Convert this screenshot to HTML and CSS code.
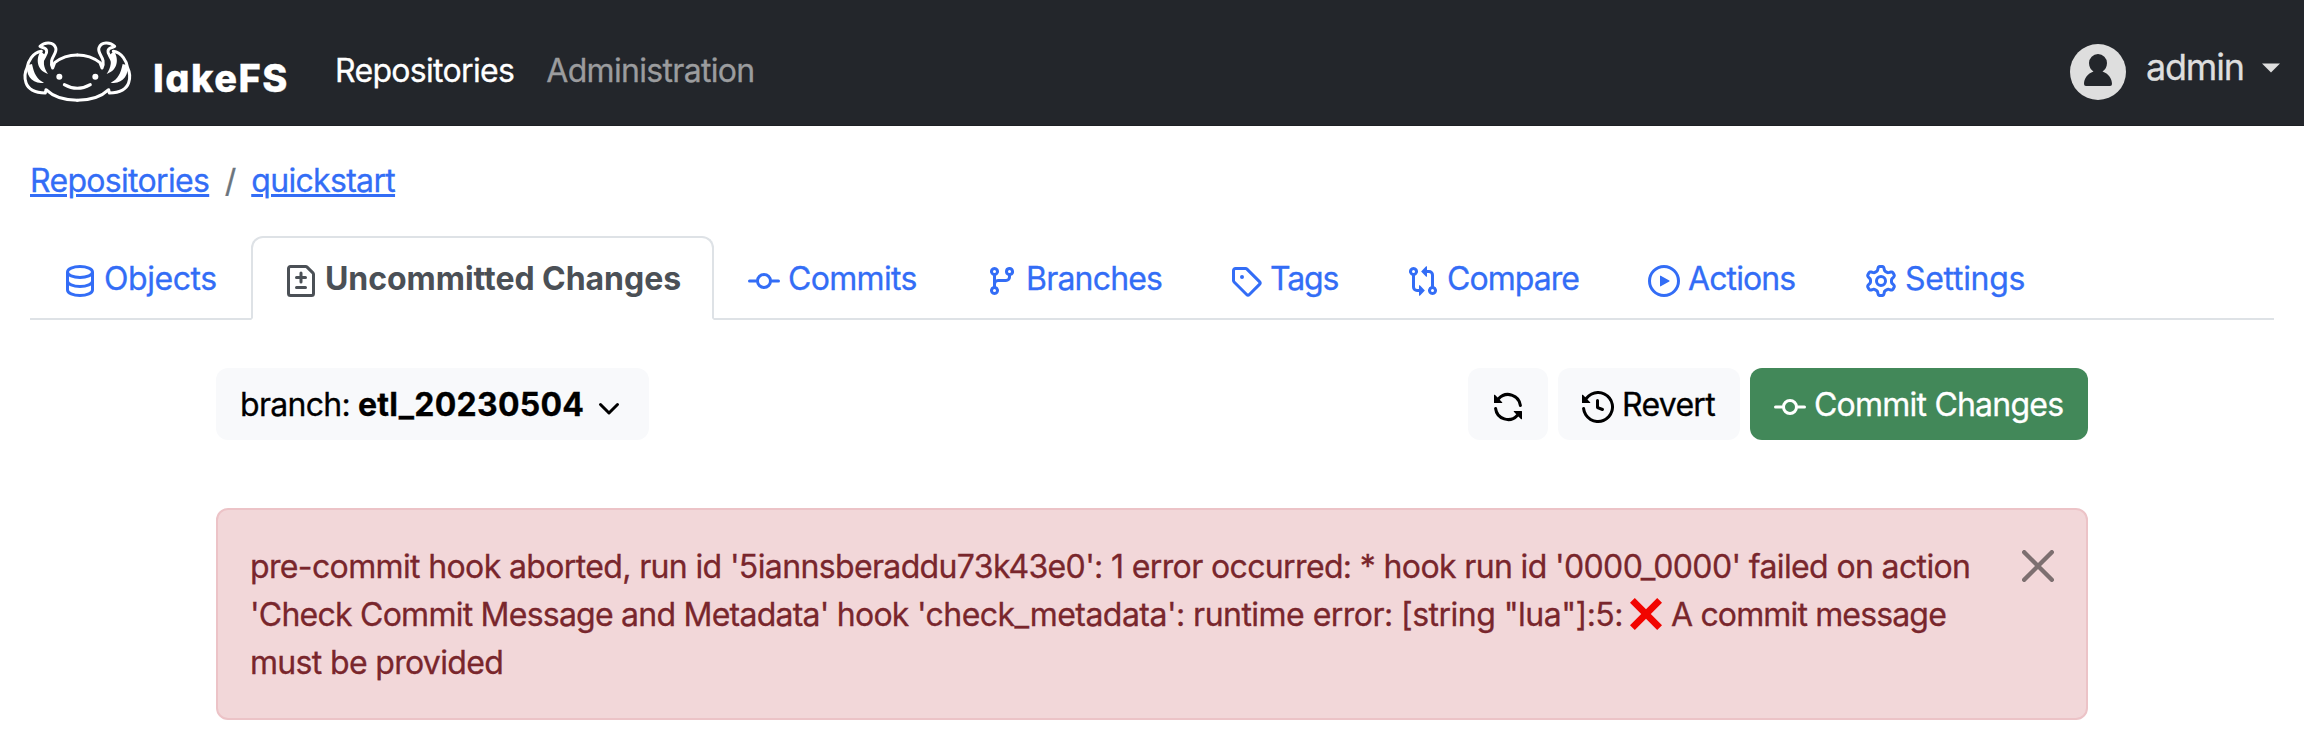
FILE: index.html
```html
<!DOCTYPE html>
<html lang="en">
<head>
<meta charset="utf-8">
<title>lakeFS</title>
<link rel="stylesheet" href="styles.css">
</head>
<body>
<header class="navbar">
  <a class="brand">
    <svg class="brand-mark" viewBox="0 0 360 210" aria-hidden="true">
      <defs>
        <g id="axolotl-side">
          <path class="line" d="M172 57Q133 57 104 80L98 96C84 66 114 54 107 35C100 17 74 17 60 31C66 36 78 33 80 44C83 58 66 62 66 84"/>
          <path class="line" d="M64 46C38 50 24 76 21 96C13 112 14 128 18 140C26 164 50 170 76 171L78 161C102 184 140 193 172 193"/>
          <path class="solid" d="M62 46C48 66 48 102 84 114C70 94 68 74 76 58ZM22 88C16 116 36 146 72 140C50 130 42 112 36 84Z"/>
          <circle class="solid" cx="118" cy="122" r="9"/>
        </g>
      </defs>
      <use href="#axolotl-side"/>
      <use href="#axolotl-side" transform="translate(344 0) scale(-1 1)"/>
      <path class="line" d="M133 146Q172 168 211 146"/>
    </svg>
    <span class="brand-name">lakeFS</span>
  </a>
  <nav class="nav-links">
    <a class="nav-link current">Repositories</a>
    <a class="nav-link">Administration</a>
  </nav>
  <div class="user">
    <svg class="avatar" viewBox="0 0 56 56" aria-hidden="true">
      <circle cx="28" cy="28" r="28" fill="#dedede"/>
      <path fill="#23262b" d="M28 10a9 9 0 0 1 9 9c0 4-2 7-4.500 8.500c6 2 9.500 7 9.500 12.500a2 2 0 0 1-2 2H16a2 2 0 0 1-2-2c0-5.500 3.500-10.500 9.500-12.500C21 26 19 23 19 19a9 9 0 0 1 9-9Z"/>
    </svg>
    <span class="user-name">admin</span>
    <svg class="caret" viewBox="0 0 18 10" aria-hidden="true"><path d="M0 .5h18L9 9.500Z"/></svg>
  </div>
</header>

<main class="page">
  <div class="breadcrumb"><a class="crumb">Repositories</a><span class="slash">/</span><a class="crumb">quickstart</a></div>

  <nav class="tabs">
    <a class="tab objects"><svg class="icon" viewBox="0 0 16 16"><g fill="none" stroke="currentColor" stroke-width="1.500"><ellipse cx="8" cy="3.500" rx="6.250" ry="2.700"/><path d="M1.750 3.500v9c0 1.500 2.800 2.750 6.250 2.750s6.250-1.250 6.250-2.750v-9M1.750 8c0 1.500 2.800 2.750 6.250 2.750S14.250 9.500 14.250 8"/></g></svg><span>Objects</span></a>
    <a class="tab active uncommitted"><svg class="icon" viewBox="0 0 16 16"><path d="M1 1.750C1 .784 1.784 0 2.750 0h7.586c.464 0 .909.184 1.237.513l2.914 2.914c.329.328.513.773.513 1.237v9.586A1.750 1.750 0 0 1 13.250 16H2.750A1.750 1.750 0 0 1 1 14.250Zm1.750-.250a.25.25 0 0 0-.250.250v12.500c0 .138.112.250.250.250h10.500a.25.25 0 0 0 .250-.250V4.664a.25.25 0 0 0-.073-.177l-2.914-2.914a.25.25 0 0 0-.177-.073ZM8 3.250a.75.75 0 0 1 .750.750v1.500h1.500a.75.75 0 0 1 0 1.500h-1.500v1.500a.75.75 0 0 1-1.500 0V7h-1.500a.75.75 0 0 1 0-1.500h1.500V4A.75.75 0 0 1 8 3.250Zm-3 8a.75.75 0 0 1 .750-.750h4.500a.75.75 0 0 1 0 1.500h-4.500a.75.75 0 0 1-.750-.750Z"/></svg><span>Uncommitted Changes</span></a>
    <a class="tab commits"><svg class="icon" viewBox="0 0 16 16"><path fill="none" stroke="currentColor" stroke-width="1.500" stroke-linecap="round" d="M.75 8h3.500M11.750 8h3.500M11.250 8a3.250 3.250 0 1 1-6.500 0 3.250 3.250 0 0 1 6.500 0Z"/></svg><span>Commits</span></a>
    <a class="tab branches"><svg class="icon" viewBox="0 0 16 16"><path d="M9.500 3.250a2.250 2.250 0 1 1 3 2.122V6A2.500 2.500 0 0 1 10 8.500H6a1 1 0 0 0-1 1v1.128a2.251 2.251 0 1 1-1.500 0V5.372a2.250 2.250 0 1 1 1.500 0v1.836A2.493 2.493 0 0 1 6 7h4a1 1 0 0 0 1-1v-.628A2.250 2.250 0 0 1 9.500 3.250Zm-6 0a.75.75 0 1 0 1.500 0 .75.75 0 0 0-1.500 0Zm8.250-.750a.75.75 0 1 0 0 1.500.75.75 0 0 0 0-1.500ZM4.250 12a.75.75 0 1 0 0 1.500.75.75 0 0 0 0-1.500Z"/></svg><span>Branches</span></a>
    <a class="tab tags"><svg class="icon" viewBox="0 0 16 16"><path d="M1 7.775V2.750C1 1.784 1.784 1 2.750 1h5.025c.464 0 .910.184 1.238.513l6.250 6.250a1.750 1.750 0 0 1 0 2.474l-5.026 5.026a1.750 1.750 0 0 1-2.474 0l-6.250-6.250A1.752 1.752 0 0 1 1 7.775Zm1.500 0c0 .066.026.130.073.177l6.250 6.250a.25.25 0 0 0 .354 0l5.025-5.025a.25.25 0 0 0 0-.354l-6.250-6.250a.25.25 0 0 0-.177-.073H2.750a.25.25 0 0 0-.250.250ZM6 5a1 1 0 1 1 0 2 1 1 0 0 1 0-2Z"/></svg><span>Tags</span></a>
    <a class="tab compare"><svg class="icon" viewBox="0 0 16 16"><path d="M9.573.677A.25.25 0 0 1 10 .854V2.500h1A2.500 2.500 0 0 1 13.500 5v5.628a2.251 2.251 0 1 1-1.500 0V5a1 1 0 0 0-1-1h-1v1.646a.25.25 0 0 1-.427.177L7.177 3.427a.25.25 0 0 1 0-.354ZM6 12v-1.646a.25.25 0 0 1 .427-.177l2.396 2.396a.25.25 0 0 1 0 .354l-2.396 2.396A.25.25 0 0 1 6 15.146V13.500H5A2.500 2.500 0 0 1 2.500 11V5.372a2.250 2.250 0 1 1 1.500 0V11a1 1 0 0 0 1 1Zm6.750 0a.75.75 0 1 0 0 1.500.75.75 0 0 0 0-1.500ZM3.250 2.500a.75.75 0 1 0 0 1.500.75.75 0 0 0 0-1.500Z"/></svg><span>Compare</span></a>
    <a class="tab actions"><svg class="icon" viewBox="0 0 16 16"><circle cx="8" cy="8" r="7.250" fill="none" stroke="currentColor" stroke-width="1.500"/><path d="M6 5.559v4.882a.25.25 0 0 0 .379.215l4.264-2.442a.25.25 0 0 0 0-.428L6.379 5.344A.25.25 0 0 0 6 5.559Z"/></svg><span>Actions</span></a>
    <a class="tab settings"><svg class="icon" viewBox="0 0 16 16"><path d="M8 0a8.200 8.200 0 0 1 .701.031C9.444.095 9.990.645 10.160 1.290l.288 1.107c.018.066.079.158.212.224.231.114.454.243.668.386.123.082.233.090.299.071l1.103-.303c.644-.176 1.392.021 1.820.630.270.385.506.792.704 1.218.315.675.111 1.422-.364 1.891l-.814.806c-.049.048-.098.147-.088.294.016.257.016.515 0 .772-.010.147.038.246.088.294l.814.806c.475.469.679 1.216.364 1.891a7.977 7.977 0 0 1-.704 1.217c-.428.610-1.176.807-1.820.630l-1.102-.302c-.067-.019-.177-.011-.300.071a5.909 5.909 0 0 1-.668.386c-.133.066-.194.158-.211.224l-.290 1.106c-.168.646-.715 1.196-1.458 1.260a8.006 8.006 0 0 1-1.402 0c-.743-.064-1.289-.614-1.458-1.260l-.289-1.106c-.018-.066-.079-.158-.212-.224a5.738 5.738 0 0 1-.668-.386c-.123-.082-.233-.090-.299-.071l-1.103.303c-.644.176-1.392-.021-1.820-.630a8.120 8.120 0 0 1-.704-1.218c-.315-.675-.111-1.422.363-1.891l.815-.806c.050-.048.098-.147.088-.294a6.214 6.214 0 0 1 0-.772c.010-.147-.038-.246-.088-.294l-.815-.806C.635 6.045.431 5.298.746 4.623a7.920 7.920 0 0 1 .704-1.217c.428-.610 1.176-.807 1.820-.630l1.102.302c.067.019.177.011.300-.071.214-.143.437-.272.668-.386.133-.066.194-.158.211-.224l.290-1.106C6.009.645 6.556.095 7.299.030 7.530.010 7.764 0 8 0Zm-.571 1.525c-.036.003-.108.036-.137.146l-.289 1.105c-.147.561-.549.967-.998 1.189-.173.086-.340.183-.500.290-.417.278-.970.423-1.529.270l-1.103-.303c-.109-.030-.175.016-.195.045-.220.312-.412.644-.573.990-.014.031-.021.110.059.190l.815.806c.411.406.562.957.530 1.456a4.709 4.709 0 0 0 0 .582c.032.499-.119 1.050-.530 1.456l-.815.806c-.081.080-.073.159-.059.190.162.346.353.677.573.989.020.030.085.076.195.046l1.102-.303c.560-.153 1.113-.008 1.530.270.161.107.328.204.501.290.447.222.850.629.997 1.189l.289 1.105c.029.109.101.143.137.146a6.600 6.600 0 0 0 1.142 0c.036-.003.108-.036.137-.146l.289-1.105c.147-.561.549-.967.998-1.189.173-.086.340-.183.500-.290.417-.278.970-.423 1.529-.270l1.103.303c.109.029.175-.016.195-.045.220-.313.411-.644.573-.990.014-.031.021-.110-.059-.190l-.815-.806c-.411-.406-.562-.957-.530-1.456a4.709 4.709 0 0 0 0-.582c-.032-.499.119-1.050.530-1.456l.815-.806c.081-.080.073-.159.059-.190a6.464 6.464 0 0 0-.573-.989c-.020-.030-.085-.076-.195-.046l-1.102.303c-.560.153-1.113.008-1.530-.270a4.440 4.440 0 0 0-.501-.290c-.447-.222-.850-.629-.997-1.189l-.289-1.105c-.029-.110-.101-.143-.137-.146a6.600 6.600 0 0 0-1.142 0ZM11 8a3 3 0 1 1-6 0 3 3 0 0 1 6 0ZM9.500 8a1.500 1.500 0 1 0-3.001.001A1.500 1.500 0 0 0 9.500 8Z"/></svg><span>Settings</span></a>
  </nav>

  <section class="content">
    <div class="toolbar">
      <button class="btn branch"><span class="branch-label">branch:</span><strong class="branch-name">etl_20230504</strong><svg class="icon" viewBox="0 0 16 16"><path fill="none" stroke="currentColor" stroke-width="1.500" stroke-linecap="round" stroke-linejoin="round" d="M3.750 6.750 8 11l4.250-4.250"/></svg></button>
      <div class="actions-group">
        <button class="btn refresh" aria-label="Refresh"><svg class="icon" viewBox="0 0 16 16"><path d="M1.705 8.005a.75.75 0 0 1 .834.656 5.500 5.500 0 0 0 9.592 2.970l-1.204-1.204a.25.25 0 0 1 .177-.427h3.646a.25.25 0 0 1 .250.250v3.646a.25.25 0 0 1-.427.177l-1.380-1.380A7.002 7.002 0 0 1 1.050 8.840a.75.75 0 0 1 .656-.834ZM8 2.500a5.487 5.487 0 0 0-4.131 1.869l1.204 1.204A.25.25 0 0 1 4.896 6H1.250A.25.25 0 0 1 1 5.750V2.104a.25.25 0 0 1 .427-.177l1.380 1.380A7.002 7.002 0 0 1 14.950 7.160a.75.75 0 0 1-1.490.178A5.500 5.500 0 0 0 8 2.500Z"/></svg></button>
        <button class="btn revert"><svg class="icon" viewBox="0 0 16 16"><path d="m.427 1.927 1.215 1.215a8.002 8.002 0 1 1-1.600 5.685.75.75 0 1 1 1.493-.154 6.500 6.500 0 1 0 1.180-4.458l1.358 1.358A.25.25 0 0 1 3.896 6H.25A.25.25 0 0 1 0 5.750V2.104a.25.25 0 0 1 .427-.177ZM7.750 4a.75.75 0 0 1 .750.750v2.992l2.028.812a.75.75 0 0 1-.557 1.392l-2.500-1A.751.751 0 0 1 7 8.250v-3.500A.75.75 0 0 1 7.750 4Z"/></svg><span>Revert</span></button>
        <button class="btn commit"><svg class="icon" viewBox="0 0 16 16"><path fill="none" stroke="currentColor" stroke-width="1.500" stroke-linecap="round" d="M.75 8h3.500M11.750 8h3.500M11.250 8a3.250 3.250 0 1 1-6.500 0 3.250 3.250 0 0 1 6.500 0Z"/></svg><span>Commit Changes</span></button>
      </div>
    </div>

    <div class="alert" role="alert">
      <div class="message">
        <span class="row first">pre-commit hook aborted, run id '5iannsberaddu73k43e0': 1 error occurred: * hook run id '0000_0000' failed on action</span>
        <span class="row second"><span><span class="action-name">'Check Commit Message and Metadata' hook </span>'check_metadata': runtime error: [string "lua"]:5:</span><svg class="cross" viewBox="0 0 32 32" role="img" aria-label="Error"><path fill="#f20500" d="M4.800 0 16 11.200 27.200 0 32 4.800 20.800 16 32 27.200 27.200 32 16 20.800 4.800 32 0 27.200 11.200 16 0 4.800Z"/></svg><span class="tail">A commit message</span></span>
        <span class="row third">must be provided</span>
      </div>
      <svg class="close" viewBox="0 0 32 32" role="img" aria-label="Close"><path d="M2.200 2.200 29.800 29.800M29.800 2.200 2.200 29.800"/></svg>
    </div>
  </section>
</main>
</body>
</html>
```
FILE: styles.css
```css
* { box-sizing: border-box; }

body {
  margin: 0;
  background: #fff;
  color: #212529;
  font: 400 32px/50px Inter, "Liberation Sans", sans-serif;
  letter-spacing: -0.68px;
  -webkit-text-stroke: 0.3px currentColor;
}

svg { display: block; flex: none; }
span, strong { white-space: nowrap; }

/* Navbar */
.navbar {
  display: flex;
  align-items: center;
  height: 126px;
  padding: 0 24px 0 20px;
  background: #23262b;
  border-bottom: 1px solid #1d2024;
}
.brand { display: flex; align-items: center; color: #fff; width: 315px; }
.brand-mark { width: 120px; height: 70px; margin-top: 16px; }
.brand-mark .line { fill: none; stroke: #fff; stroke-width: 9; stroke-linecap: round; stroke-linejoin: round; }
.brand-mark .solid { fill: #fff; }
.brand-name {
  margin: 31px 0 0 13px;
  font-size: 38px;
  font-weight: 800;
  font-feature-settings: "cv11";
  letter-spacing: 1.5px;
}
.nav-links { display: flex; gap: 32px; margin-top: 17px; }
.nav-link { color: #9b9c9e; }
.nav-link.current { color: #fff; }
.user { display: flex; align-items: center; margin-left: auto; color: #dedede; }
.avatar { width: 56px; height: 56px; margin-top: 19px; }
.user-name { margin: 9px 0 0 20px; font-size: 36px; line-height: 54px; letter-spacing: -1.2px; width: 98px; }
.caret { width: 18px; height: 10px; margin: 10px 0 0 18px; fill: #dedede; }

/* Page */
.page { padding: 30px 30px 0; }
.breadcrumb { display: flex; height: 48px; color: #6c757d; }
.crumb { color: #336df6; text-decoration: underline; text-decoration-thickness: 3px; text-underline-offset: 2px; }
.slash { width: 42px; text-align: center; }

/* Tabs */
.tabs { display: flex; margin-top: 32px; border-bottom: 2px solid #dee2e6; }
.tab {
  display: flex;
  align-items: center;
  gap: 8px;
  height: 84px;
  margin-bottom: -2px;
  padding: 0 0 0 32px;
  border: 2px solid transparent;
  border-radius: 12px 12px 0 0;
  color: #336df6;
}
.tab.active { color: #4b5056; font-weight: 700; background: #fff; border-color: #dee2e6 #dee2e6 #fff; -webkit-text-stroke: 0; }
.tab > span, .btn > span, .btn > strong { margin-top: 2px; }
.icon { width: 32px; height: 32px; margin-top: 6px; fill: currentColor; }
.objects { width: 221px; letter-spacing: -0.45px; }
.uncommitted { width: 463px; letter-spacing: -0.05px; }
.commits { width: 238px; letter-spacing: -0.67px; }
.branches { width: 244px; letter-spacing: -0.8px; }
.tags { width: 177px; letter-spacing: -1.1px; }
.compare { width: 241px; letter-spacing: -0.95px; }
.actions { width: 217px; letter-spacing: -0.9px; }
.settings { width: 229px; letter-spacing: -0.3px; }

/* Toolbar */
.content { width: 1872px; margin: 48px auto 0; }
.toolbar, .actions-group { display: flex; justify-content: space-between; }
.btn {
  display: flex;
  align-items: center;
  height: 72px;
  padding: 0 24px;
  border: 0;
  border-radius: 12px;
  background: #f8f9fb;
  color: #000;
  font: inherit;
  letter-spacing: -0.7px;
}
.branch { width: 433px; }
.branch-label { width: 118px; text-align: left; }
.branch-name { width: 235px; font-weight: 700; letter-spacing: 0.25px; text-align: left; }
.actions-group { width: 620px; }
.refresh { width: 80px; }
.revert { width: 182px; gap: 8px; }
.commit { width: 338px; gap: 8px; background: #428859; color: #fff; letter-spacing: -0.78px; }

/* Alert */
.alert {
  display: flex;
  justify-content: space-between;
  height: 212px;
  margin-top: 68px;
  padding: 32px;
  border: 2px solid #ecc3c7;
  border-radius: 12px;
  background: #f2d7d9;
  color: #79262c;
}
.row { display: flex; height: 48px; }
.first { letter-spacing: -0.635px; }
.second { letter-spacing: -0.53px; }
.second .action-name { letter-spacing: -0.76px; }
.third { letter-spacing: -0.67px; }
.second .tail { letter-spacing: -0.85px; }
.cross { width: 32px; height: 34px; margin: 7px 9px 0 7px; }
.close { width: 32px; height: 32px; margin-top: 8px; }
.close path { fill: none; stroke: #7d6f70; stroke-width: 4.4; stroke-linecap: round; }
```
